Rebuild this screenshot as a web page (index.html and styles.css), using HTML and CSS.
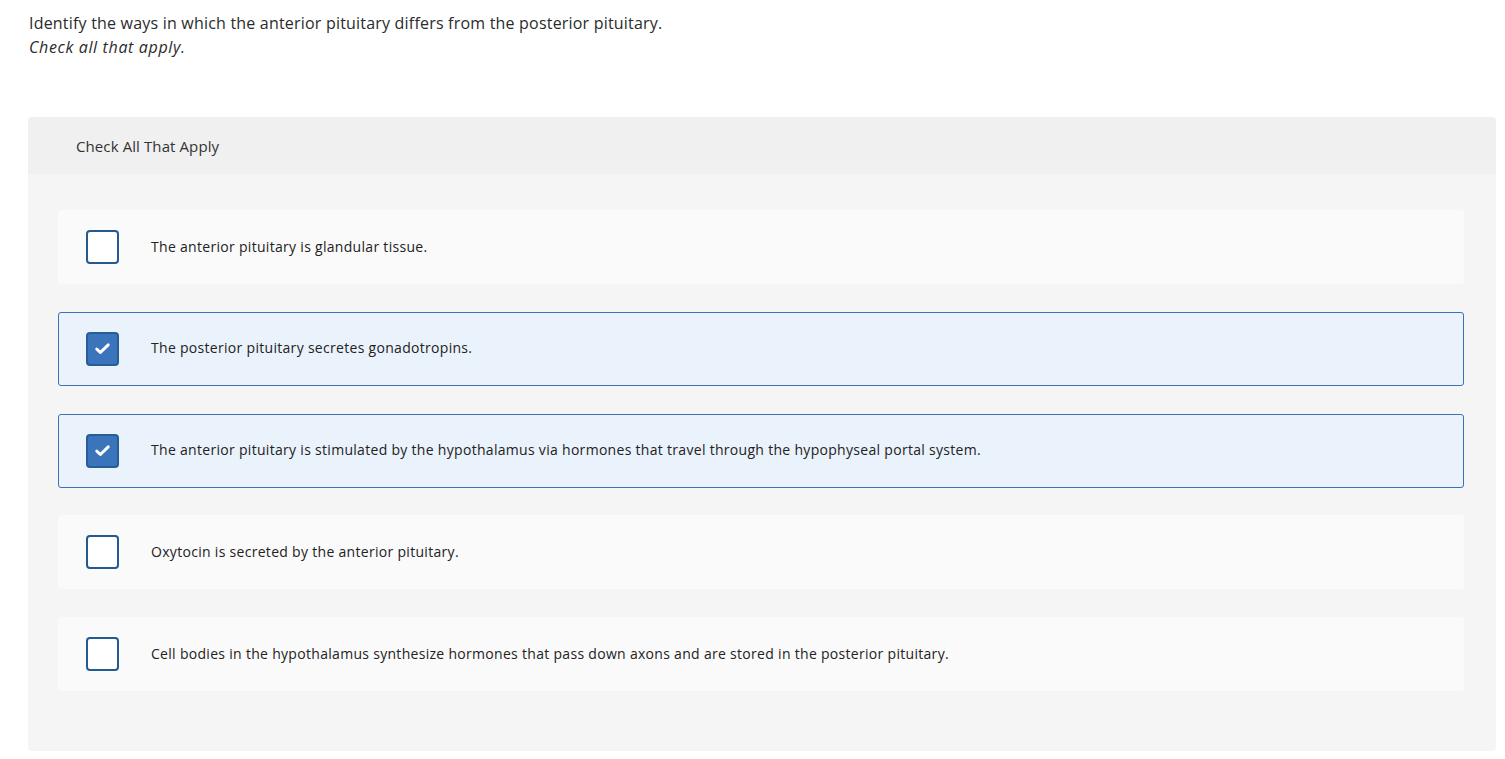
FILE: index.html
```html
<!DOCTYPE html>
<html lang="en">
<head>
  <meta charset="UTF-8" />
  <meta name="viewport" content="width=device-width, initial-scale=1.0" />
  <title>Check All That Apply</title>
  <link rel="stylesheet" href="styles.css">
</head>
<body>
  <div class="prompt">
    <p class="question">Identify the ways in which the anterior pituitary differs from the posterior pituitary.</p>
    <p class="hint">Check all that apply.</p>
  </div>

  <section class="panel">
    <div class="panel-head">Check All That Apply</div>
    <ul class="choices">
      <li class="choice">
        <span class="box"></span>
        <span class="label">The anterior pituitary is glandular tissue.</span>
      </li>
      <li class="choice checked">
        <span class="box">
          <svg viewBox="0 0 16 16" width="17" height="17"><path d="M2.6 8.6l3.4 3.2L13.4 4.6" fill="none" stroke="#fff" stroke-width="2.8" stroke-linecap="round" stroke-linejoin="round"/></svg>
        </span>
        <span class="label">The posterior pituitary secretes gonadotropins.</span>
      </li>
      <li class="choice checked">
        <span class="box">
          <svg viewBox="0 0 16 16" width="17" height="17"><path d="M2.6 8.6l3.4 3.2L13.4 4.6" fill="none" stroke="#fff" stroke-width="2.8" stroke-linecap="round" stroke-linejoin="round"/></svg>
        </span>
        <span class="label">The anterior pituitary is stimulated by the hypothalamus via hormones that travel through the hypophyseal portal system.</span>
      </li>
      <li class="choice">
        <span class="box"></span>
        <span class="label">Oxytocin is secreted by the anterior pituitary.</span>
      </li>
      <li class="choice">
        <span class="box"></span>
        <span class="label">Cell bodies in the hypothalamus synthesize hormones that pass down axons and are stored in the posterior pituitary.</span>
      </li>
    </ul>
  </section>
</body>
</html>
```

FILE: styles.css
```css
* {
  margin: 0;
  padding: 0;
  box-sizing: border-box;
}

body {
  font-family: 'Open Sans', 'Lato', sans-serif;
  color: #2b2b2b;
  background: #fff;
  padding: 12px 9px 0 28px;
}

.prompt {
  padding-left: 1px;
}

.question {
  font-size: 16px;
  line-height: 22px;
  letter-spacing: 0.2px;
}

.hint {
  font-size: 16px;
  line-height: 26px;
  font-style: italic;
  letter-spacing: 0.65px;
}

.panel {
  margin-top: 57px;
  background: #f5f5f5;
  border-radius: 4px;
  overflow: hidden;
}

.panel-head {
  background: #f0f0f0;
  height: 57px;
  padding: 1px 0 0 48px;
  display: flex;
  align-items: center;
  font-size: 15px;
  letter-spacing: 0.1px;
  color: #333;
}

.choices {
  list-style: none;
  padding: 36px 32px 60px 30px;
  display: flex;
  flex-direction: column;
  gap: 27.75px;
}

.choice {
  display: flex;
  align-items: center;
  height: 74px;
  padding-left: 27px;
  background: #fafafa;
  border: 1px solid #fafafa;
  border-radius: 3px;
  font-size: 14px;
  letter-spacing: 0.3px;
}

.choice.checked {
  background: #eaf2fc;
  border-color: #3a72b8;
}

.box {
  width: 33px;
  height: 34px;
  flex: none;
  border: 2px solid #225a91;
  border-radius: 4px;
  background: #fff;
  display: flex;
  align-items: center;
  justify-content: center;
}

.checked .box {
  background: #3a74ba;
  border-color: #2a5c95;
}

.label {
  margin-left: 32px;
  padding-bottom: 2px;
  color: #222;
}
```
